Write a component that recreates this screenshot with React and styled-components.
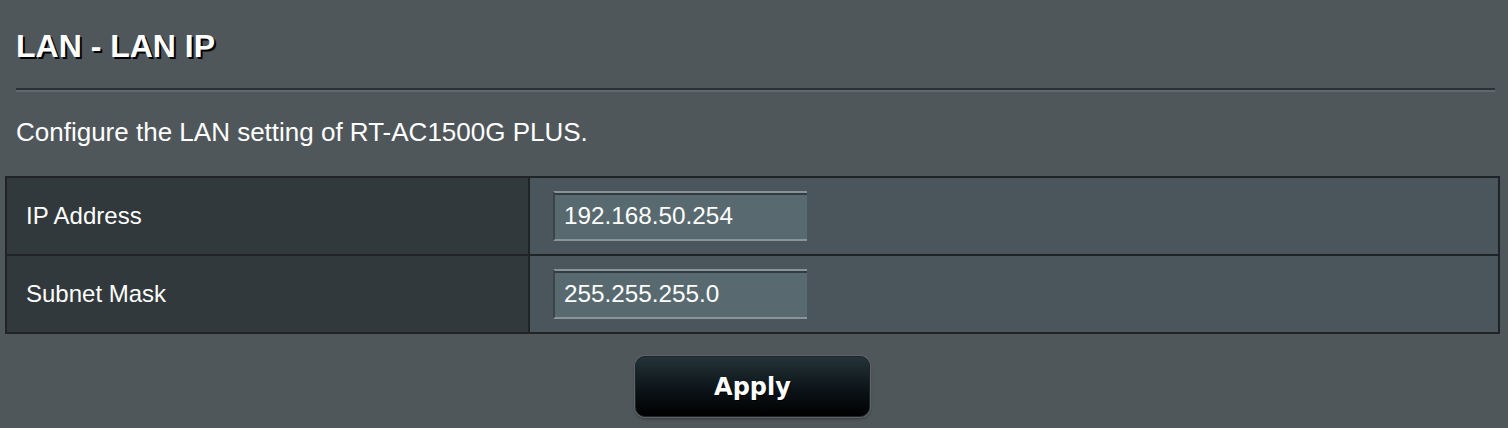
import styled, { createGlobalStyle } from 'styled-components';

const GlobalStyle = createGlobalStyle`
  html, body {
    margin: 0;
    padding: 0;
    background: #4f575a;
  }
  body {
    font-family: Arial, 'Liberation Sans', Helvetica, sans-serif;
    color: #fff;
  }
`;

const rows = [
  { label: 'IP Address', value: '192.168.50.254' },
  { label: 'Subnet Mask', value: '255.255.255.0' },
];

export default function App() {
  return (
    <>
      <GlobalStyle />
      <Page>
        <Header>
          <Title>LAN - LAN IP</Title>
          <Divider />
          <Description>Configure the LAN setting of RT-AC1500G PLUS.</Description>
        </Header>
        <SettingsTable>
          {rows.map((row) => (
            <Row key={row.label}>
              <Label>{row.label}</Label>
              <Field>
                <TextInput defaultValue={row.value} />
              </Field>
            </Row>
          ))}
        </SettingsTable>
        <Actions>
          <ApplyButton type="button">Apply</ApplyButton>
        </Actions>
      </Page>
    </>
  );
}

const Page = styled.div`
  width: 1495px;
  margin-left: 5px;
  min-height: 428px;
  box-sizing: border-box;
`;

const Header = styled.div`
  padding: 28px 5px 0 11px;
`;

const Title = styled.h1`
  margin: 0;
  font-size: 32px;
  line-height: 36px;
  font-weight: bold;
  color: #fff;
  text-shadow: 2px 2px 0 #000;
`;

const Divider = styled.div`
  margin-top: 24px;
  height: 0;
  border-top: 2px solid #2b3134;
  border-bottom: 2px solid #5e686d;
`;

const Description = styled.p`
  margin: 25px 0 0;
  font-size: 26px;
  line-height: 30px;
  color: #fff;
`;

const SettingsTable = styled.div`
  margin-top: 29px;
  display: grid;
  grid-template-columns: 523px 1fr;
  row-gap: 2px;
  background: #202427;
  border: 2px solid #202427;
`;

const Row = styled.div`
  display: contents;
`;

const Label = styled.div`
  height: 76px;
  display: flex;
  align-items: center;
  padding-left: 19px;
  margin-right: 2px;
  background: #32393c;
  font-size: 24px;
`;

const Field = styled.div`
  height: 76px;
  display: flex;
  align-items: center;
  padding-left: 23px;
  background: #4a565c;
`;

const TextInput = styled.input`
  box-sizing: border-box;
  width: 254px;
  height: 50px;
  padding: 0 0 0 9px;
  background: #586a70;
  color: #fff;
  font-family: Arial, 'Liberation Sans', Helvetica, sans-serif;
  font-size: 24.3px;
  border: 0;
  border-top: 2px solid #86939a;
  border-left: 2px solid #3b4549;
  border-bottom: 2px solid #88959a;
  box-shadow: inset 0 2px 0 #323b3f;
  outline: none;
`;

const Actions = styled.div`
  display: flex;
  justify-content: center;
  padding-top: 22px;
`;

const ApplyButton = styled.button`
  width: 235px;
  height: 61px;
  border-radius: 10px;
  border: 1px solid #1d2326;
  background: linear-gradient(to bottom, #24333a 0%, #0c1417 55%, #000 100%);
  box-shadow: 0 0 0 1px #5d6568, 0 2px 3px rgba(0, 0, 0, 0.35);
  color: #fff;
  font-family: Verdana, 'DejaVu Sans', sans-serif;
  font-weight: bold;
  font-size: 24px;
  text-shadow: 1px 1px 0 #000;
  cursor: pointer;
`;
